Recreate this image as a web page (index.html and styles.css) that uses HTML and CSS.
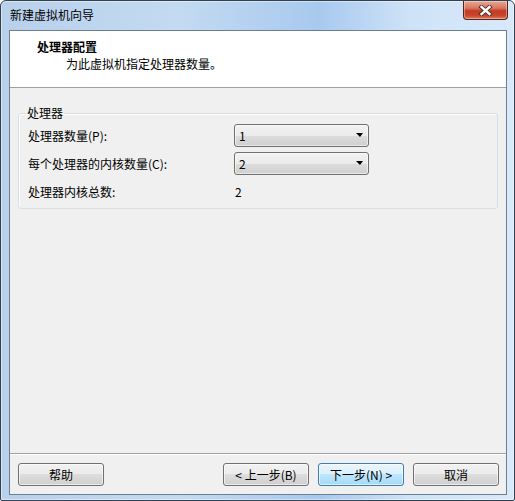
FILE: index.html
```html
<!DOCTYPE html>
<html lang="zh-CN">
<head>
    <meta charset="UTF-8">
    <title>新建虚拟机向导</title>
    <link rel="stylesheet" href="styles.css">
</head>
<body>
    <div class="window">
        <div class="titlebar">
            <div class="title">新建虚拟机向导</div>
            <div class="close-btn">
                <svg width="15" height="11" viewBox="0 0 15 11">
                    <path d="M3.5 2 L11.5 9 M11.5 2 L3.5 9" stroke="#4a2a24" stroke-width="4.2" stroke-linecap="square" fill="none"/>
                    <path d="M3.5 2 L11.5 9 M11.5 2 L3.5 9" stroke="#ffffff" stroke-width="2.4" stroke-linecap="square" fill="none"/>
                </svg>
            </div>
        </div>

        <div class="client">
            <div class="header">
                <div class="header-title">处理器配置</div>
                <div class="header-sub">为此虚拟机指定处理器数量。</div>
            </div>

            <div class="content">
                <fieldset class="group">
                    <legend>处理器</legend>
                    <div class="row">
                        <span class="label">处理器数量(P):</span>
                        <div class="combo"><span>1</span><i class="arrow"></i></div>
                    </div>
                    <div class="row">
                        <span class="label">每个处理器的内核数量(C):</span>
                        <div class="combo"><span>2</span><i class="arrow"></i></div>
                    </div>
                    <div class="row">
                        <span class="label">处理器内核总数:</span>
                        <span class="value">2</span>
                    </div>
                </fieldset>
            </div>

            <div class="footer">
                <button class="btn">帮助</button>
                <div class="nav">
                    <button class="btn">&lt; 上一步(B)</button>
                    <button class="btn default">下一步(N) &gt;</button>
                    <button class="btn">取消</button>
                </div>
            </div>
        </div>
    </div>
</body>
</html>
```

FILE: styles.css
```css
body {
    margin: 0;
    background: #ffffff;
    font-family: "Noto Sans CJK SC", "Noto Sans", sans-serif;
    font-size: 12px;
    color: #000;
}
.window {
    width: 515px;
    height: 501px;
    box-sizing: border-box;
    border: 1px solid #33404f;
    border-radius: 6px 6px 2px 2px;
    padding: 0 7px 5px 8px;
    display: flex;
    flex-direction: column;
    background: linear-gradient(to right, #b8d0ea 0%, #c3daf2 35%, #a8c9ee 62%, #cfe3f8 80%, #d8e9fa 100%);
    box-shadow: inset 0 0 0 1px rgba(255,255,255,0.45);
}
.titlebar {
    height: 29px;
    display: flex;
    justify-content: space-between;
    align-items: flex-start;
}
.title {
    margin: 6px 0 0 1px;
    line-height: 16px;
}
.close-btn {
    width: 45px;
    height: 19px;
    box-sizing: border-box;
    margin-right: -1px;
    border: 1px solid #5a2219;
    border-top: none;
    border-radius: 0 0 4px 4px;
    background: linear-gradient(#e8a896 0%, #d87560 40%, #c23b22 55%, #c8462c 80%, #dd7a5c 100%);
    box-shadow: inset 0 0 0 1px rgba(255,255,255,0.35);
    display: flex;
    align-items: center;
    justify-content: center;
}
.client {
    flex: 1;
    border: 1px solid #6a7e94;
    background: #f0f0f0;
    display: flex;
    flex-direction: column;
}
.header {
    box-sizing: border-box;
    height: 57px;
    background: #ffffff;
    border-bottom: 1px solid #a0a0a0;
    padding-top: 7px;
}
.header-title {
    font-weight: bold;
    line-height: 17px;
    padding-left: 27px;
}
.header-sub {
    line-height: 17px;
    padding-left: 56px;
}
.content {
    flex: 1;
}
.group {
    margin: 18px 8px 0 8px;
    padding: 1px 8px 3px 9px;
    border: 1px solid #d5dfe5;
    border-radius: 3px;
    box-shadow: 1px 1px 0 #ffffff inset;
}
.group legend {
    line-height: 14px;
    padding: 0 1px;
    margin-left: -2px;
}
.row {
    height: 28px;
    display: grid;
    grid-template-columns: 206px 135px;
    align-items: center;
}
.combo {
    height: 23px;
    box-sizing: border-box;
    border: 1px solid #707070;
    border-radius: 3px;
    background: linear-gradient(#f2f2f2 0%, #ebebeb 50%, #dddddd 50%, #cfcfcf 100%);
    box-shadow: inset 0 0 0 1px rgba(255,255,255,0.55);
    display: flex;
    align-items: center;
    justify-content: space-between;
    padding: 0 5px 0 4px;
}
.arrow {
    width: 0;
    height: 0;
    border-top: 4px solid #000;
    border-left: 4px solid transparent;
    border-right: 3px solid transparent;
}
.value {
    padding-left: 1px;
}
.footer {
    border-top: 1px solid #a0a0a0;
    box-shadow: inset 0 1px 0 #ffffff;
    padding: 9px 7px 8px 8px;
    display: flex;
    justify-content: space-between;
}
.nav {
    display: flex;
    gap: 9px;
}
.btn {
    width: 86px;
    height: 23px;
    padding: 0;
    font-family: inherit;
    font-size: 12px;
    color: #000;
    border: 1px solid #707070;
    border-radius: 3px;
    background: linear-gradient(#f2f2f2 0%, #ebebeb 50%, #dddddd 50%, #cfcfcf 100%);
    box-shadow: inset 0 0 0 1px rgba(255,255,255,0.6);
}
.btn.default {
    border-color: #3c7fb1;
    background: linear-gradient(#eaf6fd 0%, #d9f0fc 50%, #bee6fd 50%, #a7d9f5 100%);
}
```
